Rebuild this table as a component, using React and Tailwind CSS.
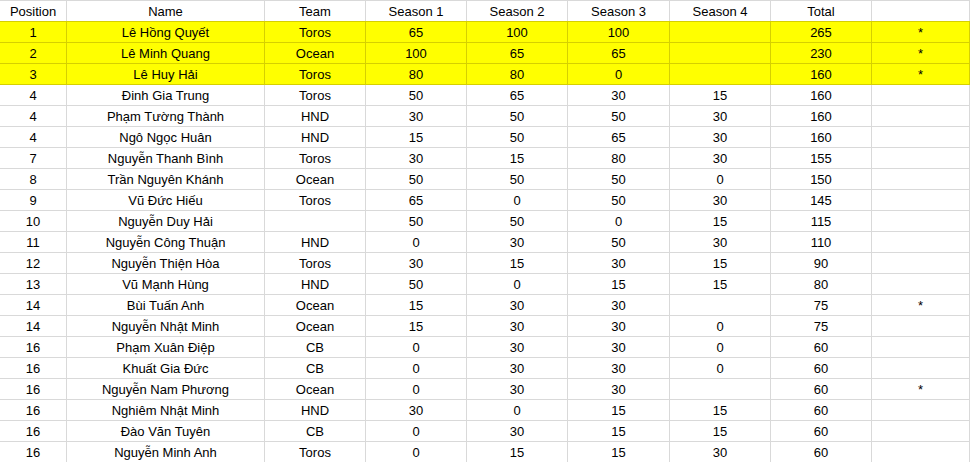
const widths = ["w-[67px]", "w-[198px]", "w-[101px]", "w-[101px]", "w-[101px]", "w-[102px]", "w-[101px]", "w-[101px]", "flex-1"]

const headers = ["Position", "Name", "Team", "Season 1", "Season 2", "Season 3", "Season 4", "Total", ""]

const rows = [
  ["1", "Lê Hồng Quyết", "Toros", "65", "100", "100", "", "265", "*"],
  ["2", "Lê Minh Quang", "Ocean", "100", "65", "65", "", "230", "*"],
  ["3", "Lê Huy Hải", "Toros", "80", "80", "0", "", "160", "*"],
  ["4", "Đinh Gia Trung", "Toros", "50", "65", "30", "15", "160", ""],
  ["4", "Phạm Tường Thành", "HND", "30", "50", "50", "30", "160", ""],
  ["4", "Ngô Ngọc Huân", "HND", "15", "50", "65", "30", "160", ""],
  ["7", "Nguyễn Thanh Bình", "Toros", "30", "15", "80", "30", "155", ""],
  ["8", "Trần Nguyên Khánh", "Ocean", "50", "50", "50", "0", "150", ""],
  ["9", "Vũ Đức Hiếu", "Toros", "65", "0", "50", "30", "145", ""],
  ["10", "Nguyễn Duy Hải", "", "50", "50", "0", "15", "115", ""],
  ["11", "Nguyễn Công Thuận", "HND", "0", "30", "50", "30", "110", ""],
  ["12", "Nguyễn Thiện Hòa", "Toros", "30", "15", "30", "15", "90", ""],
  ["13", "Vũ Mạnh Hùng", "HND", "50", "0", "15", "15", "80", ""],
  ["14", "Bùi Tuấn Anh", "Ocean", "15", "30", "30", "", "75", "*"],
  ["14", "Nguyễn Nhật Minh", "Ocean", "15", "30", "30", "0", "75", ""],
  ["16", "Phạm Xuân Điệp", "CB", "0", "30", "30", "0", "60", ""],
  ["16", "Khuất Gia Đức", "CB", "0", "30", "30", "0", "60", ""],
  ["16", "Nguyễn Nam Phương", "Ocean", "0", "30", "30", "", "60", "*"],
  ["16", "Nghiêm Nhật Minh", "HND", "30", "0", "15", "15", "60", ""],
  ["16", "Đào Văn Tuyên", "CB", "0", "30", "15", "15", "60", ""],
  ["16", "Nguyễn Minh Anh", "Toros", "0", "15", "15", "30", "60", ""],
]

export default function App() {
  return (
    <div className="w-[970px] h-[462px] overflow-hidden bg-white text-black text-[13px] leading-none" style={{ fontFamily: '"Liberation Sans", Arial, sans-serif' }}>
      <div className="flex h-[22px] border-t border-b border-t-[#d9d9d9] border-b-[#d6d000]">
        {headers.map((h, i) => (
          <div key={i} className={`${widths[i]} shrink-0 border-r border-[#d9d9d9] flex items-center justify-center`}>
            {h}
          </div>
        ))}
      </div>
      {rows.map((r, ri) => {
        const top = ri < 3
        return (
          <div key={ri} className={`flex h-[21px] border-b ${top ? "bg-[#ffff00] border-[#d6d000]" : "border-[#d9d9d9]"}`}>
            {r.map((c, ci) => (
              <div key={ci} className={`${widths[ci]} shrink-0 border-r flex items-center justify-center ${top ? "border-[#d6d000]" : "border-[#d9d9d9]"}`}>
                {c}
              </div>
            ))}
          </div>
        )
      })}
    </div>
  )
}
